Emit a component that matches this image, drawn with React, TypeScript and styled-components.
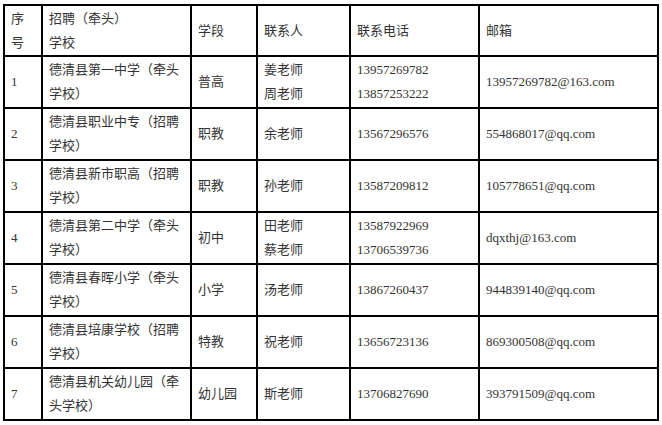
import React from "react";
import styled, { createGlobalStyle } from "styled-components";

const GlobalStyle = createGlobalStyle`
  html, body {
    margin: 0;
    padding: 0;
    background: #fff;
  }
  body {
    font-family: "Liberation Serif", "Noto Sans CJK SC", serif;
  }
`;

const Page = styled.div`
  padding: 4px 3px;
`;

const Table = styled.table`
  border-collapse: collapse;
  table-layout: fixed;
  width: 654px;
  color: #333;
  font-size: 13px;
  line-height: 24px;
`;

const Row = styled.tr<{ header?: boolean }>`
  height: ${({ header }) => (header ? "51px" : "52px")};
`;

const Cell = styled.td`
  border: 2px solid #000;
  padding: 0 6px;
  vertical-align: middle;
  text-align: left;
  font-weight: normal;
  word-break: break-all;
`;

type School = {
  no: string;
  name: string;
  stage: string;
  contacts: string[];
  phones: string[];
  email: string;
};

const schools: School[] = [
  { no: "1", name: "德清县第一中学（牵头学校）", stage: "普高", contacts: ["姜老师", "周老师"], phones: ["13957269782", "13857253222"], email: "13957269782@163.com" },
  { no: "2", name: "德清县职业中专（招聘学校）", stage: "职教", contacts: ["余老师"], phones: ["13567296576"], email: "554868017@qq.com" },
  { no: "3", name: "德清县新市职高（招聘学校）", stage: "职教", contacts: ["孙老师"], phones: ["13587209812"], email: "105778651@qq.com" },
  { no: "4", name: "德清县第二中学（牵头学校）", stage: "初中", contacts: ["田老师", "蔡老师"], phones: ["13587922969", "13706539736"], email: "dqxthj@163.com" },
  { no: "5", name: "德清县春晖小学（牵头学校）", stage: "小学", contacts: ["汤老师"], phones: ["13867260437"], email: "944839140@qq.com" },
  { no: "6", name: "德清县培康学校（招聘学校）", stage: "特教", contacts: ["祝老师"], phones: ["13656723136"], email: "869300508@qq.com" },
  { no: "7", name: "德清县机关幼儿园（牵头学校）", stage: "幼儿园", contacts: ["斯老师"], phones: ["13706827690"], email: "393791509@qq.com" },
];

const Lines: React.FC<{ items: string[] }> = ({ items }) => (
  <>
    {items.map((t, i) => (
      <div key={i}>{t}</div>
    ))}
  </>
);

export default function App() {
  return (
    <Page>
      <GlobalStyle />
      <Table>
        <colgroup>
          <col style={{ width: 38 }} />
          <col style={{ width: 149 }} />
          <col style={{ width: 66 }} />
          <col style={{ width: 93 }} />
          <col style={{ width: 129 }} />
          <col style={{ width: 179 }} />
        </colgroup>
        <tbody>
          <Row header>
            <Cell>序<br />号</Cell>
            <Cell>招聘（牵头）<br />学校</Cell>
            <Cell>学段</Cell>
            <Cell>联系人</Cell>
            <Cell>联系电话</Cell>
            <Cell>邮箱</Cell>
          </Row>
          {schools.map((s) => (
            <Row key={s.no}>
              <Cell>{s.no}</Cell>
              <Cell>{s.name}</Cell>
              <Cell>{s.stage}</Cell>
              <Cell><Lines items={s.contacts} /></Cell>
              <Cell><Lines items={s.phones} /></Cell>
              <Cell>{s.email}</Cell>
            </Row>
          ))}
        </tbody>
      </Table>
    </Page>
  );
}
